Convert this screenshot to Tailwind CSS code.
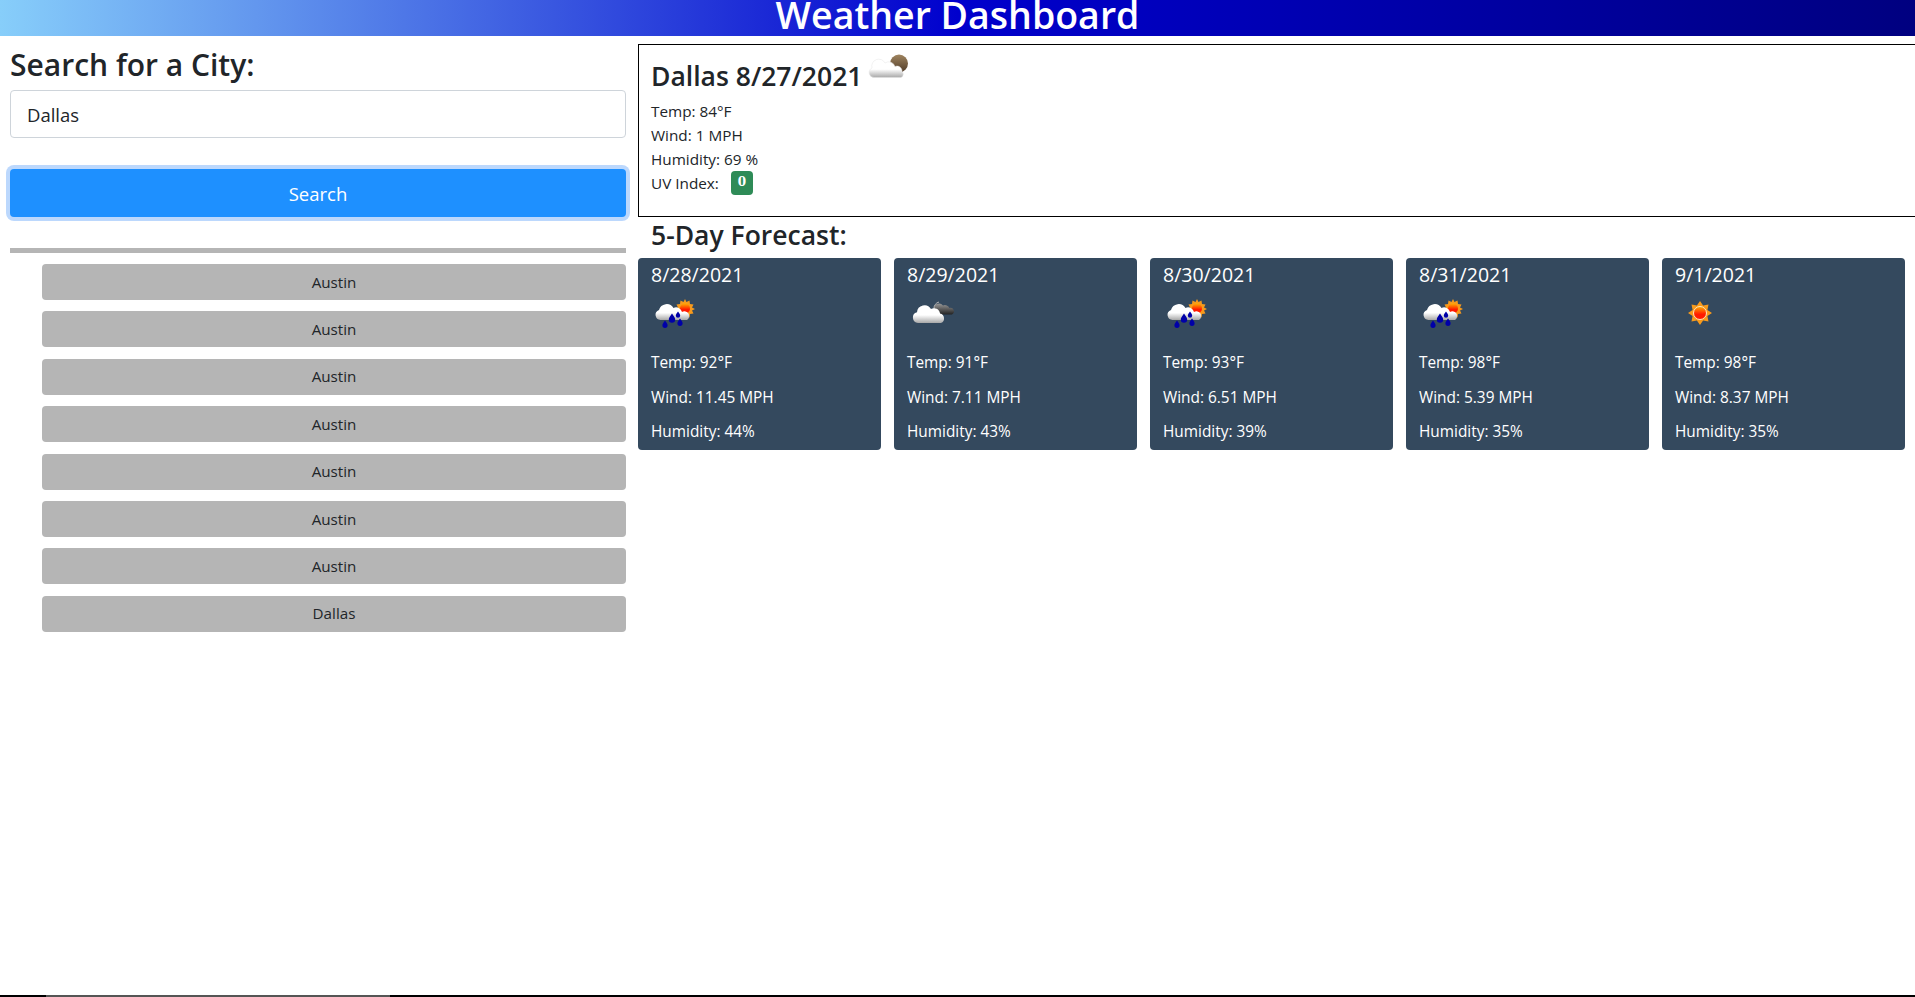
<!DOCTYPE html>
<html lang="en">
<head>
    <meta charset="UTF-8">
    <meta name="viewport" content="width=device-width, initial-scale=1.0">
    <title>Weather Dashboard</title>
    <script src="https://cdn.jsdelivr.net/npm/@tailwindcss/browser@4"></script>
</head>
<body class="relative h-[997px] w-[1915px] overflow-hidden bg-white font-['Open_Sans','Noto_Sans',sans-serif] text-[#212529]">
    <!-- Icon definitions -->
    <svg class="absolute h-0 w-0">
        <defs>
            <linearGradient id="cloud" x1="0" y1="0" x2="0" y2="1">
                <stop offset="0.55" stop-color="#ffffff"/>
                <stop offset="1" stop-color="#a8a8a8"/>
            </linearGradient>
            <linearGradient id="sun" x1="0" y1="0" x2="0" y2="1">
                <stop offset="0" stop-color="#ffb000"/>
                <stop offset="0.6" stop-color="#ff1a00"/>
            </linearGradient>
            <linearGradient id="moon" x1="0" y1="0" x2="0" y2="1">
                <stop offset="0" stop-color="#999999"/>
                <stop offset="1" stop-color="#222222"/>
            </linearGradient>
            <linearGradient id="dusk" x1="0" y1="0" x2="0" y2="1">
                <stop offset="0" stop-color="#a08560"/>
                <stop offset="1" stop-color="#4f3b28"/>
            </linearGradient>
            <symbol id="rain-sun" viewBox="0 0 50 50">
                <path d="M34 11l1.500 3 3-1.500 .5 3.500 3.500 .5-1.500 3 3 1.500-3 1.500 1.500 3-3.500 .5-.5 3.500-3-1.500-1.500 3-1.500-3-3 1.500-.5-3.500-3.500-.5 1.500-3-3-1.500 3-1.500-1.500-3 3.500-.5 .5-3.500 3 1.500z" fill="#f79a1c"/>
                <circle cx="34" cy="20.500" r="5" fill="url(#sun)"/>
                <path d="M9.500 32a5.200 5.200 0 0 1-1.500-10.100a8 8 0 0 1 14.500-2a6 6 0 0 1 8.500 4.100a4.200 4.200 0 0 1 5 8z" fill="url(#cloud)"/>
                <path d="M21 25.500c2 3 3.200 4.200 3.200 6a3.200 3.200 0 0 1-6.400 0c0-1.800 1.200-3 3.200-6z" fill="#0000a8"/>
                <path d="M27 23.500c1.300 2 2.200 2.800 2.200 4a2.200 2.200 0 0 1-4.400 0c0-1.200.9-2 2.200-4z" fill="#0000a8"/>
                <path d="M14 32.500c1.600 2.400 2.600 3.200 2.600 4.800a2.600 2.600 0 0 1-5.200 0c0-1.600 1-2.400 2.600-4.800z" fill="#0000a8"/>
                <path d="M29 30.500c1.600 2.400 2.600 3.200 2.600 4.800a2.600 2.600 0 0 1-5.200 0c0-1.600 1-2.400 2.600-4.800z" fill="#0000a8"/>
            </symbol>
            <symbol id="night-cloud" viewBox="0 0 50 50">
                <path d="M27 20a5 5 0 0 1 9-2.500a5 5 0 0 1 6.500 2.500a3.500 3.500 0 0 1 2.500 6.500h-14z" fill="url(#moon)"/>
                <path d="M27 21a6.500 6.500 0 0 1 5-7" fill="none" stroke="#b5b5b5" stroke-width="1"/>
                <path d="M11 35a5.500 5.500 0 0 1-1-10.800a7.500 7.500 0 0 1 14-3.200a6 6 0 0 1 9 4.500a5 5 0 0 1 1 9.500z" fill="url(#cloud)"/>
            </symbol>
            <symbol id="clear-sun" viewBox="0 0 50 50">
                <polygon points="25,13 28.100,17.600 33.500,16.500 32.400,21.900 37,25 32.400,28.100 33.500,33.500 28.100,32.400 25,37 21.900,32.400 16.500,33.500 17.600,28.100 13,25 17.600,21.900 16.500,16.500 21.900,17.600" fill="#f79a1c"/>
                <circle cx="25" cy="25" r="6.500" fill="url(#sun)" stroke="#ffe6c0" stroke-width="1"/>
            </symbol>
            <symbol id="day-cloud" viewBox="0 0 50 50">
                <circle cx="33" cy="10.500" r="9" fill="url(#dusk)"/>
                <path d="M8 24.500a5 5 0 0 1-2-9.500a7 7 0 0 1 13-5a6.500 6.500 0 0 1 10 3.500a5 5 0 0 1 7 5a3.500 3.500 0 0 1-1 6z" fill="url(#cloud)" stroke="#e4e4e4" stroke-width="0.5"/>
            </symbol>
        </defs>
    </svg>

    <!-- Header -->
    <header class="h-9 overflow-hidden bg-[linear-gradient(to_right,#87cefa,#0000cd,#000080)] text-center text-[37.5px] leading-[30px] font-semibold text-white">
        Weather Dashboard
    </header>

    <main class="flex w-[1930px] items-start gap-3 pt-2 pl-2.5">
        <!-- Search column -->
        <section class="w-[616px] shrink-0">
            <h2 class="pt-0.5 text-[30px] leading-[38px] font-semibold">Search for a City:</h2>
            <input type="text" value="Dallas" class="mt-1.5 block h-12 w-full rounded border border-[#ced4da] px-4 text-[18.5px]">
            <button class="mt-[31px] block h-12 w-full rounded bg-[#1e90ff] pt-px text-[18.5px] text-white ring-4 ring-[#bcd8fd]">Search</button>
            <hr class="mt-[31px] h-[5px] border-0 bg-[#b5b5b5]">
            <div class="mt-[11px] ml-8 flex flex-col gap-[11.4px]">
                <button class="h-9 rounded bg-[#b5b5b5] text-[15.2px]">Austin</button>
                <button class="h-9 rounded bg-[#b5b5b5] text-[15.2px]">Austin</button>
                <button class="h-9 rounded bg-[#b5b5b5] text-[15.2px]">Austin</button>
                <button class="h-9 rounded bg-[#b5b5b5] text-[15.2px]">Austin</button>
                <button class="h-9 rounded bg-[#b5b5b5] text-[15.2px]">Austin</button>
                <button class="h-9 rounded bg-[#b5b5b5] text-[15.2px]">Austin</button>
                <button class="h-9 rounded bg-[#b5b5b5] text-[15.2px]">Austin</button>
                <button class="h-9 rounded bg-[#b5b5b5] text-[15.2px]">Dallas</button>
            </div>
        </section>

        <!-- Weather column -->
        <section class="min-w-0 flex-1">
            <div class="h-[173px] border border-black pr-[13px] pl-3 pt-2">
                <div class="flex h-[46px] items-start">
                    <h2 class="mt-1.5 text-[26.5px] leading-[34px] font-semibold">Dallas 8/27/2021</h2>
                    <svg class="ml-1 size-[50px]"><use href="#day-cloud"/></svg>
                </div>
                <p class="text-[15.3px] leading-6">Temp: 84°F</p>
                <p class="text-[15.3px] leading-6">Wind: 1 MPH</p>
                <p class="text-[15.3px] leading-6">Humidity: 69 %</p>
                <p class="flex items-center text-[15.3px] leading-6">UV Index:
                    <span class="ml-3 flex h-6 w-[22px] items-center justify-center rounded bg-[#2e8b57] pb-[3px] font-['DejaVu_Serif',serif] text-xs font-bold text-white">0</span>
                </p>
            </div>
            <h3 class="pt-px pl-[13px] text-[26.5px] leading-[34px] font-semibold">5-Day Forecast:</h3>

            <div class="mt-1.5 flex gap-[13px]">
                <article class="h-48 w-[243px] rounded bg-[#34495e] px-[13px] text-[15.4px] text-white">
                    <h5 class="pt-[5px] text-[19.5px] leading-6">8/28/2021</h5>
                    <svg class="mt-px size-[50px]"><use href="#rain-sun"/></svg>
                    <p class="mt-[13px] leading-6">Temp: 92°F</p>
                    <p class="mt-[11px] leading-6">Wind: 11.45 MPH</p>
                    <p class="mt-[10px] leading-6">Humidity: 44%</p>
                </article>
                <article class="h-48 w-[243px] rounded bg-[#34495e] px-[13px] text-[15.4px] text-white">
                    <h5 class="pt-[5px] text-[19.5px] leading-6">8/29/2021</h5>
                    <svg class="mt-px size-[50px]"><use href="#night-cloud"/></svg>
                    <p class="mt-[13px] leading-6">Temp: 91°F</p>
                    <p class="mt-[11px] leading-6">Wind: 7.11 MPH</p>
                    <p class="mt-[10px] leading-6">Humidity: 43%</p>
                </article>
                <article class="h-48 w-[243px] rounded bg-[#34495e] px-[13px] text-[15.4px] text-white">
                    <h5 class="pt-[5px] text-[19.5px] leading-6">8/30/2021</h5>
                    <svg class="mt-px size-[50px]"><use href="#rain-sun"/></svg>
                    <p class="mt-[13px] leading-6">Temp: 93°F</p>
                    <p class="mt-[11px] leading-6">Wind: 6.51 MPH</p>
                    <p class="mt-[10px] leading-6">Humidity: 39%</p>
                </article>
                <article class="h-48 w-[243px] rounded bg-[#34495e] px-[13px] text-[15.4px] text-white">
                    <h5 class="pt-[5px] text-[19.5px] leading-6">8/31/2021</h5>
                    <svg class="mt-px size-[50px]"><use href="#rain-sun"/></svg>
                    <p class="mt-[13px] leading-6">Temp: 98°F</p>
                    <p class="mt-[11px] leading-6">Wind: 5.39 MPH</p>
                    <p class="mt-[10px] leading-6">Humidity: 35%</p>
                </article>
                <article class="h-48 w-[243px] rounded bg-[#34495e] px-[13px] text-[15.4px] text-white">
                    <h5 class="pt-[5px] text-[19.5px] leading-6">9/1/2021</h5>
                    <svg class="mt-px size-[50px]"><use href="#clear-sun"/></svg>
                    <p class="mt-[13px] leading-6">Temp: 98°F</p>
                    <p class="mt-[11px] leading-6">Wind: 8.37 MPH</p>
                    <p class="mt-[10px] leading-6">Humidity: 35%</p>
                </article>
            </div>
        </section>
    </main>

    <!-- Horizontal scrollbar strip -->
    <div class="absolute inset-x-0 bottom-0 h-0.5 bg-black">
        <div class="ml-[46px] h-full w-[344px] bg-[#555555]"></div>
    </div>
</body>
</html>
